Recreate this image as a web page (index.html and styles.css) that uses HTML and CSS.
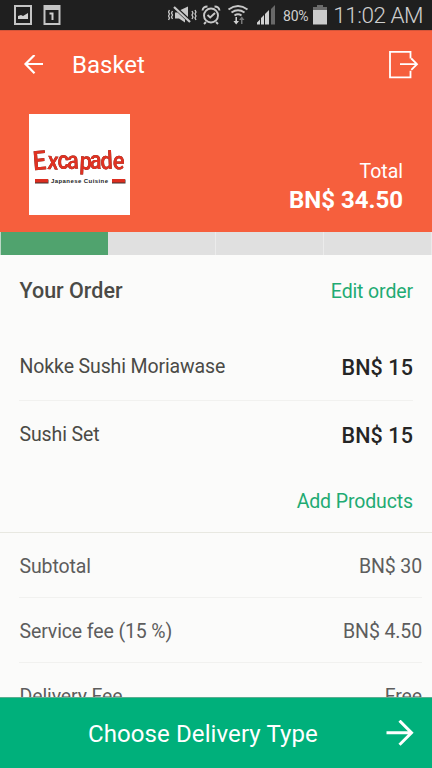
FILE: index.html
```html
<!DOCTYPE html>
<html lang="en">
<head>
<meta charset="utf-8">
<title>Basket</title>
<link rel="stylesheet" href="styles.css">
</head>
<body>
<div class="screen">
  <div class="status">
    <svg class="status-left" width="48" height="30" viewBox="0 0 48 30">
      <rect x="1" y="6" width="16" height="18" fill="none" stroke="#c4c4c4" stroke-width="2"/>
      <path d="M4 19v-3l3-1 2 1 5-3v6z" fill="#d0d0d0"/>
      <rect x="30.500" y="6" width="15" height="18" fill="none" stroke="#c4c4c4" stroke-width="2"/>
      <path d="M30 6h16v4H30z" fill="#c4c4c4"/>
      <path d="M35.500 13.500h3V20" fill="none" stroke="#d0d0d0" stroke-width="2"/>
    </svg>
    <svg class="status-icons" width="110" height="30" viewBox="0 0 110 30">
      <g fill="none" stroke="#c8c8c8" stroke-width="1.300">
        <path d="M1.500 10l-1 2 1 2-1 2 1 2-1 2M4.500 11l-1 2 1 2-1 2 1 2M24 11l1 2-1 2 1 2-1 2M27 10l1 2-1 2 1 2-1 2 1 2"/>
        <path d="M6 7l16 15" stroke-width="2.200"/>
      </g>
      <path d="M7 12.500h2.500L17 19.500v3L11 18.500H7zM12.500 10L20 6.500V17z" fill="#c8c8c8"/>
      <g fill="none" stroke="#c8c8c8" stroke-width="1.900">
        <circle cx="43" cy="15.500" r="7"/>
        <path d="M39.500 15l2.700 2.500 4.800-4.500M38 22l-2 2M48 22l2 2"/>
        <path d="M34.500 10.500q.5-4 5-4M51.500 10.500q-.5-4-5-4"/>
        <path d="M60.500 9.500q9.500-7 19 0M63.500 12.500q6.500-4.500 13 0M66.500 15.500q3.500-2.500 7 0"/>
      </g>
      <path d="M67.500 17h1.500v4h2l-2.800 3.500-2.800-3.500h2z" fill="#d0d0d0"/>
      <path d="M73 24v-4h-2l2.800-3.500 2.700 3.500h-2v4z" fill="#777"/>
      <path d="M89 24.500v-2l3-3v5zM93 24.500V18l3-3v9.500zM97 24.500V14l4-4v14.500z" fill="#d0d0d0"/>
      <path d="M103 24.500V9l4-4v19.500z" fill="#686868"/>
    </svg>
    <span class="battery-text">80%</span>
    <svg class="battery" width="14" height="30" viewBox="0 0 14 30">
      <path d="M0 7h4V5h6v2h4v4H0z" fill="#6b6b6b"/>
      <path d="M0 10h14v14.500H0z" fill="#cbcbcb"/>
    </svg>
    <span class="clock">11:02 AM</span>
  </div>

  <header class="header">
    <div class="toolbar">
      <svg class="back" width="20" height="20" viewBox="0 0 20 20"><path d="M20 9H3M11.500 0L2.500 9l9 9.300" fill="none" stroke="#fff" stroke-width="2.200"/></svg>
      <h1 class="title">Basket</h1>
      <svg width="30" height="28" viewBox="0 0 30 28"><path d="M21.500 7.500V.9H1v25.500h20.500V19.800M11 13.200H28M22.300 7.500l5.700 5.700-5.700 5.700" fill="none" stroke="#fff" stroke-width="1.800"/></svg>
    </div>
    <div class="summary">
      <svg class="logo" width="101" height="101" viewBox="0 0 101 101">
        <rect width="101" height="101" fill="#fff"/>
        <text class="logo-name" transform="scale(.88 1)" x="5 20.500 32.500 43.500 57 69 81.500 95" y="56.500 55 55.300 55.300 55.300 55.300 55.500 55" rotate="-5 4 0 -3 3 0 -3 2"><tspan class="logo-cap">E</tspan>xcapade</text>
        <path d="M6 65.500h13.500v4H6zM83 65.500h13.500v4H83z" fill="#403330"/>
        <path d="M6 65h13v3.600H6zM83 65h13v3.600H83z" fill="#dc2e20"/>
        <text class="logo-tag" x="22" y="68.600" textLength="57">Japanese Cuisine</text>
      </svg>
      <div class="total">
        <span class="total-label">Total</span>
        <span class="total-value">BN$ 34.50</span>
      </div>
    </div>
  </header>

  <div class="progress"><i class="step done"></i><i class="step"></i><i class="step"></i><i class="step"></i></div>

  <main class="content">
    <section class="order">
      <div class="order-head"><h2 class="order-title">Your Order</h2><a class="link edit">Edit order</a></div>
      <div class="item first"><span class="item-name">Nokke Sushi Moriawase</span><span class="price">BN$ 15</span></div>
      <div class="item"><span class="item-name">Sushi Set</span><span class="price">BN$ 15</span></div>
      <div class="add"><a class="link">Add Products</a></div>
    </section>
    <section class="fees">
      <div class="fee"><span>Subtotal</span><span>BN$ 30</span></div>
      <div class="fee"><span>Service fee (15 %)</span><span>BN$ 4.50</span></div>
      <div class="fee"><span>Delivery Fee</span><span>Free</span></div>
    </section>
  </main>

  <footer class="cta">
    <span class="cta-label">Choose Delivery Type</span>
    <svg width="28" height="28" viewBox="0 0 28 28"><path d="M.5 12.700H26M13.500.7l12 12-12 12" fill="none" stroke="#fff" stroke-width="3"/></svg>
  </footer>
</div>
</body>
</html>
```
FILE: styles.css
```css
* { box-sizing: border-box; }
body { margin: 0; font-family: Roboto, "Liberation Sans", sans-serif; font-size: 19.500px; }
h1, h2 { margin: 0; }
svg { display: block; flex: none; }
.screen { width: 432px; height: 768px; display: flex; flex-direction: column; overflow: hidden; background: #fbfbfa; }

.status { flex: none; height: 30px; background: #1f1f1f; color: #cfcfcf; display: flex; align-items: center; padding: 0 9px 0 14px; white-space: nowrap; }
.status-icons { margin-left: 106px; }
.battery-text { font-size: 14px; width: 27px; margin-left: 5px; padding-top: 1px; letter-spacing: -.2px; }
.battery { margin-left: 3px; }
.clock { margin-left: auto; font-size: 22.500px; font-weight: 300; letter-spacing: -.5px; line-height: 30px; }

.header { flex: none; height: 202px; background: #f65f3d; color: #fff; border-top: 1px solid #d4553a; }
.toolbar { height: 67px; display: flex; align-items: center; padding: 0 13px 0 23px; }
.title { flex: 1; margin-left: 29px; font-size: 24px; font-weight: 400; line-height: 32px; }
.summary { display: flex; justify-content: space-between; padding: 16px 29px 0; }
.total { display: flex; flex-direction: column; align-items: flex-end; padding-top: 44px; }
.total-label { line-height: 28px; }
.total-value { font-size: 24px; font-weight: 700; line-height: 28px; }
.logo-name { font: 600 25px Roboto, sans-serif; fill: #e03222; filter: drop-shadow(.7px .7px .2px #4a3531); }
.logo-cap { font-size: 27px; }
.logo-tag { font: 700 6px "Liberation Sans", sans-serif; fill: #222; }

.progress { flex: none; height: 23px; display: grid; grid-template-columns: repeat(4, 1fr); background: #ebebeb; }
.step { background: #e0e0e0; border-right: 1px solid #ebebeb; }
.step.done { background: #50a36e; border-right: 0; border-left: 1px solid #bdd8c6; }

.content { flex: 1; min-height: 0; overflow: hidden; color: #4a4a46; letter-spacing: -.12px; }
.order { border-bottom: 1px solid #e8e8e1; }
.order-head { height: 77px; padding: 20px 19px 0 19.500px; display: flex; justify-content: space-between; line-height: 32px; }
.order-title { font-size: 21.500px; font-weight: 500; letter-spacing: 0; }
.link { color: #1fab73; }
.edit { padding-top: 1px; }
.item { margin: 0 19px; padding-left: .5px; height: 66px; display: flex; justify-content: space-between; align-items: center; }
.item.first { height: 69px; border-bottom: 1px solid #f1f1ef; }
.price { font-size: 21.500px; font-weight: 500; letter-spacing: .1px; color: #252525; padding-top: 3px; }
.add { height: 65px; padding: 4px 19px 0; display: flex; justify-content: flex-end; align-items: center; }
.fee { margin: 0 10px 0 19px; height: 65px; display: flex; justify-content: space-between; align-items: center; border-bottom: 1px solid #f1f1ef; color: #5d5d5d; padding: 3px 0 0 .5px; }

.cta { flex: none; height: 71px; background: #00b07b; border-top: 1px solid #5cae90; color: #fff; display: flex; align-items: center; justify-content: space-between; padding: 1px 18px 0 88px; font-size: 24px; letter-spacing: .1px; }
```
